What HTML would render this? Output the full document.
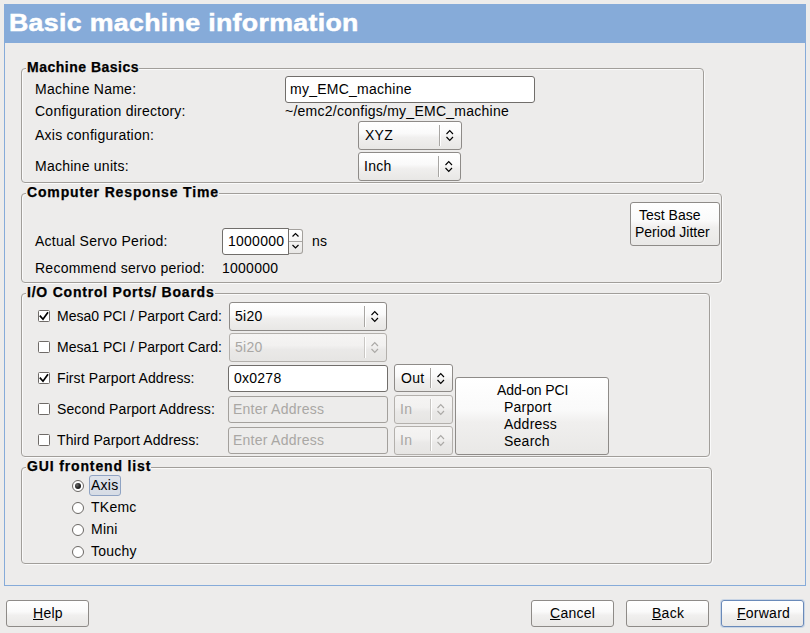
<!DOCTYPE html>
<html><head><meta charset="utf-8">
<style>
html,body{margin:0;padding:0;}
body{width:810px;height:633px;background:#EDECEB;position:relative;overflow:hidden;font-family:"Liberation Sans",sans-serif;}
.a{position:absolute;box-sizing:border-box;}
.t{position:absolute;font-size:14px;line-height:17px;letter-spacing:0.25px;white-space:pre;color:#000;}
.b{font-weight:bold;letter-spacing:1px;}
.dis{color:#A9A7A4;}
/* etched frame */
.fr{position:absolute;box-sizing:border-box;border:1px solid #A19E9A;border-radius:4px;}
.frl{position:absolute;box-sizing:border-box;border:1px solid #FAFAFA;border-radius:4px;}
.lbl{position:absolute;font-size:14px;line-height:17px;letter-spacing:0.8px;-webkit-text-stroke:0.25px #000;font-weight:bold;white-space:pre;color:#000;background:#EDECEB;padding:0 0 0 1px;}
/* combo */
.cb{position:absolute;box-sizing:border-box;border:1px solid #8E8B88;border-radius:3px;
  background:linear-gradient(#FFFFFF 0%,#FAFAFA 42%,#F0EFEE 58%,#E8E7E5 100%);}
.cb.dis{border-color:#B3B0AC;background:linear-gradient(#F5F4F3 0%,#F2F1F0 42%,#EAE9E8 58%,#E6E5E3 100%);}
.sep{position:absolute;width:1px;background:#A8A6A3;box-shadow:1px 0 0 #FFFFFF;}
.sep2{position:absolute;width:1px;background:#FFFFFF;}
.entry{position:absolute;box-sizing:border-box;border:1px solid #716E6B;border-radius:3px;background:#FFFFFF;}
.entry.dis{border-color:#A3A09C;background:#EDECEB;}
.btn{position:absolute;box-sizing:border-box;border:1px solid #8E8B88;border-radius:3px;
  background:linear-gradient(#FFFFFF 0%,#FAFAFA 42%,#F0EFEE 58%,#E9E8E6 100%);}
.chk{position:absolute;box-sizing:border-box;width:12px;height:12px;border:1px solid #6F6B68;border-radius:1.5px;background:#fff;}
.rad{position:absolute;box-sizing:border-box;width:12px;height:12px;border:1px solid #6B6865;border-radius:50%;background:#fff;}
svg{position:absolute;overflow:visible;}
u{text-decoration:underline;text-decoration-thickness:1px;text-underline-offset:1px;}
</style></head>
<body>
<!-- outer frame -->
<div class="a" style="left:4px;top:4px;width:802px;height:582px;border:1px solid #86ABD9;"></div>
<div class="a" style="left:4px;top:4px;width:802px;height:39px;background:#86ABD9;"></div>
<div class="t" style="left:9px;top:8px;font-size:24px;line-height:29px;font-weight:bold;letter-spacing:0.3px;color:#fff;-webkit-text-stroke:0.5px #fff;transform:scaleX(1.113);transform-origin:0 0;">Basic machine information</div>

<!-- Frame 1 : Machine Basics -->
<div class="frl" style="left:22px;top:69px;width:683px;height:115px;"></div>
<div class="fr" style="left:21px;top:68px;width:683px;height:115px;"></div>
<div class="lbl" style="left:26px;top:59px;letter-spacing:0.5px;">Machine Basics</div>
<div class="t" style="left:35px;top:81px;">Machine Name:</div>
<div class="t" style="left:35px;top:103px;">Configuration directory:</div>
<div class="t" style="left:35px;top:127px;">Axis configuration:</div>
<div class="t" style="left:35px;top:158px;">Machine units:</div>
<div class="entry" style="left:285px;top:76px;width:250px;height:27px;"></div>
<div class="t" style="left:290px;top:81px;">my_EMC_machine</div>
<div class="t" style="left:285px;top:103px;">~/emc2/configs/my_EMC_machine</div>

<div class="cb" style="left:358px;top:121px;width:104px;height:29px;"></div>
<div class="sep" style="left:439px;top:125px;height:21px;"></div>
<div class="t" style="left:365px;top:127px;">XYZ</div>
<svg style="left:446px;top:129px;" width="8" height="13"><path d="M0.5 5 L3.75 1.5 L7 5 M0.5 8 L3.75 11.5 L7 8" fill="none" stroke="#000" stroke-width="1.15"/></svg>

<div class="cb" style="left:358px;top:152px;width:103px;height:29px;"></div>
<div class="sep" style="left:438px;top:156px;height:21px;"></div>
<div class="t" style="left:364px;top:158px;">Inch</div>
<svg style="left:445px;top:160px;" width="8" height="13"><path d="M0.5 5 L3.75 1.5 L7 5 M0.5 8 L3.75 11.5 L7 8" fill="none" stroke="#000" stroke-width="1.15"/></svg>

<!-- Frame 2 : Computer Response Time -->
<div class="frl" style="left:22px;top:194px;width:701px;height:90px;"></div>
<div class="fr" style="left:21px;top:193px;width:701px;height:90px;"></div>
<div class="lbl" style="left:26px;top:184px;letter-spacing:0.85px;">Computer Response Time</div>
<div class="btn" style="left:630px;top:202px;width:90px;height:44px;"></div>
<div class="t" style="left:639px;top:207px;letter-spacing:0;">Test Base</div>
<div class="t" style="left:635px;top:224px;letter-spacing:0;">Period Jitter</div>
<div class="t" style="left:35px;top:233px;">Actual Servo Period:</div>
<div class="entry" style="left:222px;top:228px;width:67px;height:27px;border-radius:3px 0 0 3px;"></div>
<div class="t" style="left:228px;top:233px;">1000000</div>
<div class="a" style="left:289px;top:229px;width:14px;height:25px;border:1px solid #A3A09C;border-left:none;border-radius:0 3px 3px 0;background:linear-gradient(#FFFFFF,#F4F3F2 50%,#E8E7E5 100%);"></div>
<div class="a" style="left:289px;top:241px;width:13px;height:1px;background:#A8A6A3;"></div>
<svg style="left:292px;top:232px;" width="8" height="18"><path d="M0.5 4.5 L3.5 1.5 L6.5 4.5 M0.5 13 L3.5 16 L6.5 13" fill="none" stroke="#000" stroke-width="1.2"/></svg>
<div class="t" style="left:312px;top:233px;">ns</div>
<div class="t" style="left:35px;top:260px;">Recommend servo period:</div>
<div class="t" style="left:222px;top:260px;">1000000</div>

<!-- Frame 3 : I/O Control Ports/ Boards -->
<div class="frl" style="left:22px;top:294px;width:689px;height:164px;"></div>
<div class="fr" style="left:21px;top:293px;width:689px;height:164px;"></div>
<div class="lbl" style="left:26px;top:284px;letter-spacing:0.78px;">I/O Control Ports/ Boards</div>

<div class="chk" style="left:38px;top:310px;"></div>
<svg style="left:39px;top:311px;" width="10" height="10"><path d="M0.8 4.6 L4 8.2 L9 1.2" fill="none" stroke="#000" stroke-width="1.7"/></svg>
<div class="t" style="left:57px;top:308px;letter-spacing:0;">Mesa0 PCI / Parport Card:</div>
<div class="cb" style="left:229px;top:302px;width:158px;height:29px;"></div>
<div class="sep" style="left:364px;top:306px;height:21px;"></div>
<div class="t" style="left:235px;top:308px;">5i20</div>
<svg style="left:371px;top:310px;" width="8" height="13"><path d="M0.5 5 L3.75 1.5 L7 5 M0.5 8 L3.75 11.5 L7 8" fill="none" stroke="#000" stroke-width="1.15"/></svg>

<div class="chk" style="left:38px;top:341px;"></div>
<div class="t" style="left:57px;top:339px;letter-spacing:0;">Mesa1 PCI / Parport Card:</div>
<div class="cb dis" style="left:229px;top:333px;width:158px;height:29px;"></div>
<div class="sep" style="left:364px;top:337px;height:21px;background:#C9C7C4;"></div>
<div class="t dis" style="left:235px;top:339px;">5i20</div>
<svg style="left:371px;top:341px;" width="8" height="13"><path d="M0.5 5 L3.75 1.5 L7 5 M0.5 8 L3.75 11.5 L7 8" fill="none" stroke="#ABA9A6" stroke-width="1.15"/></svg>

<div class="chk" style="left:38px;top:372px;"></div>
<svg style="left:39px;top:373px;" width="10" height="10"><path d="M0.8 4.6 L4 8.2 L9 1.2" fill="none" stroke="#000" stroke-width="1.7"/></svg>
<div class="t" style="left:57px;top:370px;letter-spacing:0.1px;">First Parport Address:</div>
<div class="entry" style="left:228px;top:365px;width:160px;height:27px;"></div>
<div class="t" style="left:234px;top:370px;">0x0278</div>
<div class="cb" style="left:394px;top:364px;width:59px;height:28px;"></div>
<div class="sep" style="left:430px;top:368px;height:20px;"></div>
<div class="t" style="left:401px;top:370px;">Out</div>
<svg style="left:437px;top:372px;" width="8" height="13"><path d="M0.5 5 L3.75 1.5 L7 5 M0.5 8 L3.75 11.5 L7 8" fill="none" stroke="#000" stroke-width="1.15"/></svg>

<div class="chk" style="left:38px;top:403px;"></div>
<div class="t" style="left:57px;top:401px;letter-spacing:0.1px;">Second Parport Address:</div>
<div class="entry dis" style="left:228px;top:396px;width:160px;height:27px;"></div>
<div class="t dis" style="left:233px;top:401px;">Enter Address</div>
<div class="cb dis" style="left:394px;top:395px;width:59px;height:29px;"></div>
<div class="sep" style="left:430px;top:399px;height:21px;background:#C9C7C4;"></div>
<div class="t dis" style="left:400px;top:401px;">In</div>
<svg style="left:437px;top:403px;" width="8" height="13"><path d="M0.5 5 L3.75 1.5 L7 5 M0.5 8 L3.75 11.5 L7 8" fill="none" stroke="#ABA9A6" stroke-width="1.15"/></svg>

<div class="chk" style="left:38px;top:434px;"></div>
<div class="t" style="left:57px;top:432px;letter-spacing:0.1px;">Third Parport Address:</div>
<div class="entry dis" style="left:228px;top:427px;width:160px;height:27px;"></div>
<div class="t dis" style="left:233px;top:432px;">Enter Address</div>
<div class="cb dis" style="left:394px;top:426px;width:59px;height:29px;"></div>
<div class="sep" style="left:430px;top:430px;height:21px;background:#C9C7C4;"></div>
<div class="t dis" style="left:400px;top:432px;">In</div>
<svg style="left:437px;top:434px;" width="8" height="13"><path d="M0.5 5 L3.75 1.5 L7 5 M0.5 8 L3.75 11.5 L7 8" fill="none" stroke="#ABA9A6" stroke-width="1.15"/></svg>

<div class="btn" style="left:455px;top:377px;width:154px;height:78px;"></div>
<div class="t" style="left:497px;top:382px;letter-spacing:-0.1px;">Add-on PCI</div>
<div class="t" style="left:504px;top:399px;">Parport</div>
<div class="t" style="left:504px;top:416px;">Address</div>
<div class="t" style="left:504px;top:433px;">Search</div>

<!-- Frame 4 : GUI frontend list -->
<div class="frl" style="left:22px;top:468px;width:691px;height:97px;"></div>
<div class="fr" style="left:21px;top:467px;width:691px;height:97px;"></div>
<div class="lbl" style="left:26px;top:458px;letter-spacing:0.86px;">GUI frontend list</div>

<div class="rad" style="left:72px;top:480px;"></div>
<div class="a" style="left:75px;top:483px;width:6px;height:6px;border-radius:50%;background:radial-gradient(circle at 35% 35%,#6A6A6A 0,#222 55%,#111 100%);"></div>
<div class="a" style="left:89px;top:475px;width:32px;height:21px;border:1px solid #8FA3C3;border-radius:3px;background:linear-gradient(#DFE3EA,#D6DCE5);"></div>
<div class="t" style="left:91px;top:477px;">Axis</div>
<div class="rad" style="left:72px;top:502px;"></div>
<div class="t" style="left:91px;top:499px;">TKemc</div>
<div class="rad" style="left:72px;top:524px;"></div>
<div class="t" style="left:91px;top:521px;">Mini</div>
<div class="rad" style="left:72px;top:546px;"></div>
<div class="t" style="left:91px;top:543px;">Touchy</div>

<!-- bottom buttons -->
<div class="btn" style="left:6px;top:600px;width:83px;height:27px;"></div>
<div class="t" style="left:33px;top:605px;"><u>H</u>elp</div>
<div class="btn" style="left:531px;top:600px;width:83px;height:27px;"></div>
<div class="t" style="left:550px;top:605px;"><u>C</u>ancel</div>
<div class="btn" style="left:626px;top:600px;width:83px;height:27px;"></div>
<div class="t" style="left:652px;top:605px;"><u>B</u>ack</div>
<div class="btn" style="left:721px;top:600px;width:83px;height:27px;border-color:#6A8AB9;box-shadow:0 0 0 1px rgba(134,171,217,0.35);"></div>
<div class="t" style="left:737px;top:605px;"><u>F</u>orward</div>
</body></html>
